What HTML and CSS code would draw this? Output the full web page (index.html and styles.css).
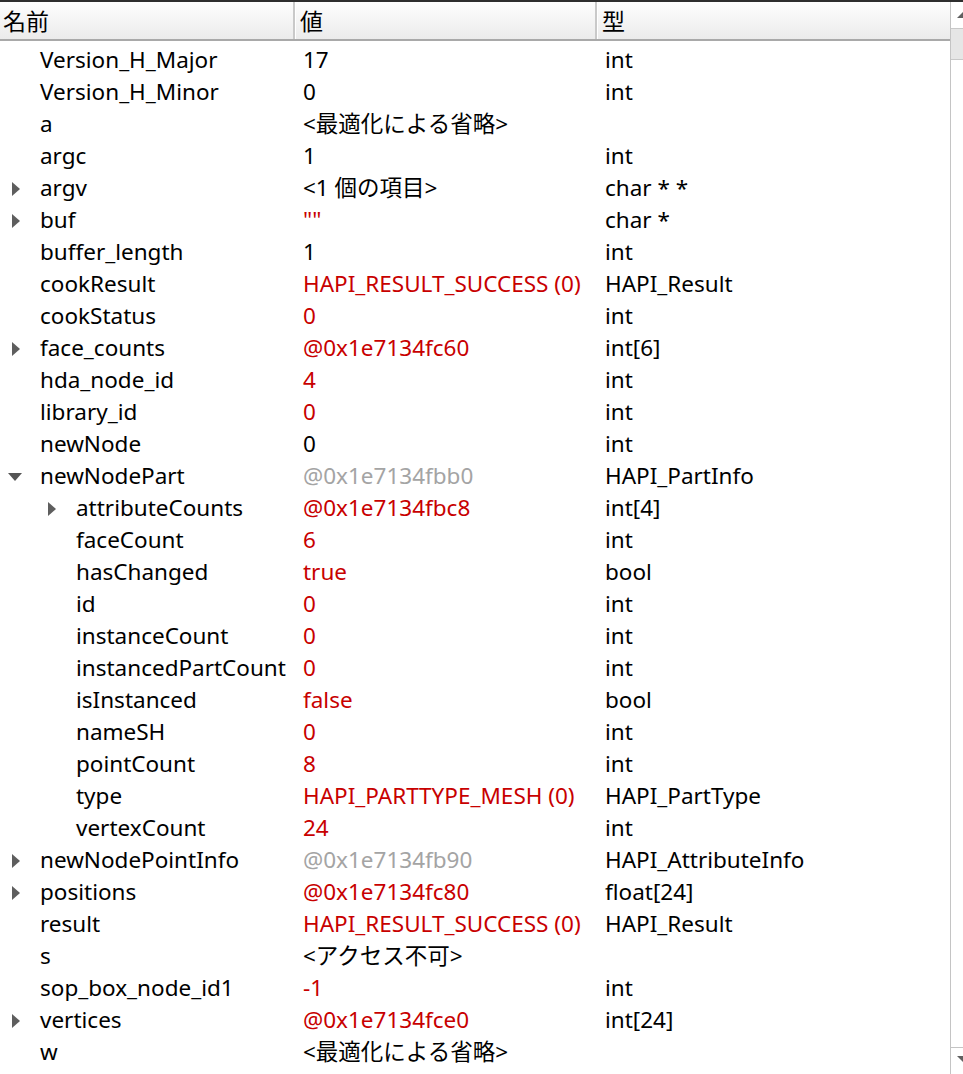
FILE: index.html
```html
<!DOCTYPE html>
<html lang="ja">
<head>
	<meta charset="UTF-8">
	<title>locals</title>
	<link rel="stylesheet" href="styles.css">
</head>
<body>
	<div class="view">
		<div class="tree">
			<div class="head">
				<div class="hcell">名前</div>
				<div class="hcell">値</div>
				<div class="hcell">型</div>
			</div>
			<ul class="rows">
				<li><span class="name">Version_H_Major</span><span class="val">17</span><span class="type">int</span></li>
				<li><span class="name">Version_H_Minor</span><span class="val">0</span><span class="type">int</span></li>
				<li><span class="name">a</span><span class="val">&lt;最適化による省略&gt;</span><span class="type"></span></li>
				<li><span class="name">argc</span><span class="val">1</span><span class="type">int</span></li>
				<li><span class="name closed">argv</span><span class="val">&lt;1 個の項目&gt;</span><span class="type">char * *</span></li>
				<li><span class="name closed">buf</span><span class="val red">""</span><span class="type">char *</span></li>
				<li><span class="name">buffer_length</span><span class="val">1</span><span class="type">int</span></li>
				<li><span class="name">cookResult</span><span class="val red">HAPI_RESULT_SUCCESS (0)</span><span class="type">HAPI_Result</span></li>
				<li><span class="name">cookStatus</span><span class="val red">0</span><span class="type">int</span></li>
				<li><span class="name closed">face_counts</span><span class="val red">@0x1e7134fc60</span><span class="type">int[6]</span></li>
				<li><span class="name">hda_node_id</span><span class="val red">4</span><span class="type">int</span></li>
				<li><span class="name">library_id</span><span class="val red">0</span><span class="type">int</span></li>
				<li><span class="name">newNode</span><span class="val">0</span><span class="type">int</span></li>
				<li><span class="name open">newNodePart</span><span class="val grey">@0x1e7134fbb0</span><span class="type">HAPI_PartInfo</span></li>
				<li><span class="name sub closed">attributeCounts</span><span class="val red">@0x1e7134fbc8</span><span class="type">int[4]</span></li>
				<li><span class="name sub">faceCount</span><span class="val red">6</span><span class="type">int</span></li>
				<li><span class="name sub">hasChanged</span><span class="val red">true</span><span class="type">bool</span></li>
				<li><span class="name sub">id</span><span class="val red">0</span><span class="type">int</span></li>
				<li><span class="name sub">instanceCount</span><span class="val red">0</span><span class="type">int</span></li>
				<li><span class="name sub">instancedPartCount</span><span class="val red">0</span><span class="type">int</span></li>
				<li><span class="name sub">isInstanced</span><span class="val red">false</span><span class="type">bool</span></li>
				<li><span class="name sub">nameSH</span><span class="val red">0</span><span class="type">int</span></li>
				<li><span class="name sub">pointCount</span><span class="val red">8</span><span class="type">int</span></li>
				<li><span class="name sub">type</span><span class="val red">HAPI_PARTTYPE_MESH (0)</span><span class="type">HAPI_PartType</span></li>
				<li><span class="name sub">vertexCount</span><span class="val red">24</span><span class="type">int</span></li>
				<li><span class="name closed">newNodePointInfo</span><span class="val grey">@0x1e7134fb90</span><span class="type">HAPI_AttributeInfo</span></li>
				<li><span class="name closed">positions</span><span class="val red">@0x1e7134fc80</span><span class="type">float[24]</span></li>
				<li><span class="name">result</span><span class="val red">HAPI_RESULT_SUCCESS (0)</span><span class="type">HAPI_Result</span></li>
				<li><span class="name">s</span><span class="val">&lt;アクセス不可&gt;</span><span class="type"></span></li>
				<li><span class="name">sop_box_node_id1</span><span class="val red">-1</span><span class="type">int</span></li>
				<li><span class="name closed">vertices</span><span class="val red">@0x1e7134fce0</span><span class="type">int[24]</span></li>
				<li><span class="name">w</span><span class="val">&lt;最適化による省略&gt;</span><span class="type"></span></li>
			</ul>
		</div>
		<div class="scroll">
			<span class="up"></span>
			<span class="thumb"></span>
			<span class="track"></span>
			<span class="down"></span>
		</div>
	</div>
</body>
</html>
```

FILE: styles.css
```css
html,body{
	margin: 0;
	padding: 0;
	background: #fff;
}
ul{
	list-style: none;
	margin: 0;
	padding: 0;
}
.view{
	display: flex;
	width: 963px;
	height: 1074px;
	overflow: hidden;
	border-top: 2px solid #2e2e2e;
	box-sizing: border-box;
	font-family: "Noto Sans", "Noto Sans CJK JP", sans-serif;
	font-size: 22.5px;
	color: #000;
}
.tree{
	width: 950px;
	flex: none;
}
.head{
	display: grid;
	grid-template-columns: 295px 302px 1fr;
	height: 37px;
	background: linear-gradient(#fefefe, #ebebeb);
	border-bottom: 2px solid #a9a9a9;
}
.hcell{
	padding-left: 4px;
	line-height: 37px;
	font-family: "Noto Sans CJK JP", sans-serif;
	font-size: 23px;
	border-left: 1px solid #fff;
}
.hcell:first-child{
	border-left: none;
	padding-left: 3px;
}
.hcell + .hcell{
	box-shadow: -2px 0 0 #c9c9c9;
}
.rows{
	padding-top: 3px;
}
.rows li{
	display: grid;
	grid-template-columns: 295px 302px 1fr;
	height: 32px;
	line-height: 32px;
	white-space: nowrap;
}
.name{
	position: relative;
	padding-left: 40px;
}
.name.sub{
	padding-left: 76px;
}
.name.closed::before,
.name.open::before{
	content: "";
	position: absolute;
	top: 10px;
	left: 12px;
	border-style: solid;
	border-width: 7px 0 7px 8px;
	border-color: transparent transparent transparent #5e5e5e;
}
.name.sub.closed::before{
	left: 48px;
}
.name.open::before{
	top: 13px;
	left: 8px;
	border-width: 8px 7px 0 7px;
	border-color: #555 transparent transparent transparent;
}
.val{
	padding-left: 8px;
}
.type{
	padding-left: 8px;
}
.red{
	color: #c80000;
}
.grey{
	color: #a4a4a4;
}
.scroll{
	flex: 1;
	display: flex;
	flex-direction: column;
	border-left: 1px solid #c4c4c4;
	background: #fff;
}
.up,.down{
	height: 26px;
	position: relative;
}
.up::before{
	content: "";
	position: absolute;
	left: 6px;
	top: 10px;
	border-style: solid;
	border-width: 0 6px 6px 6px;
	border-color: transparent transparent #606060 transparent;
}
.down{
	border-top: 1px solid #c4c4c4;
}
.down::before{
	content: "";
	position: absolute;
	left: 6px;
	top: 8px;
	border-style: solid;
	border-width: 6px 6px 0 6px;
	border-color: #606060 transparent transparent transparent;
}
.thumb{
	height: 30px;
	background: #e6e6e6;
	border-top: 1px solid #c8c8c8;
	border-bottom: 1px solid #c8c8c8;
}
.track{
	flex: 1;
}
```
